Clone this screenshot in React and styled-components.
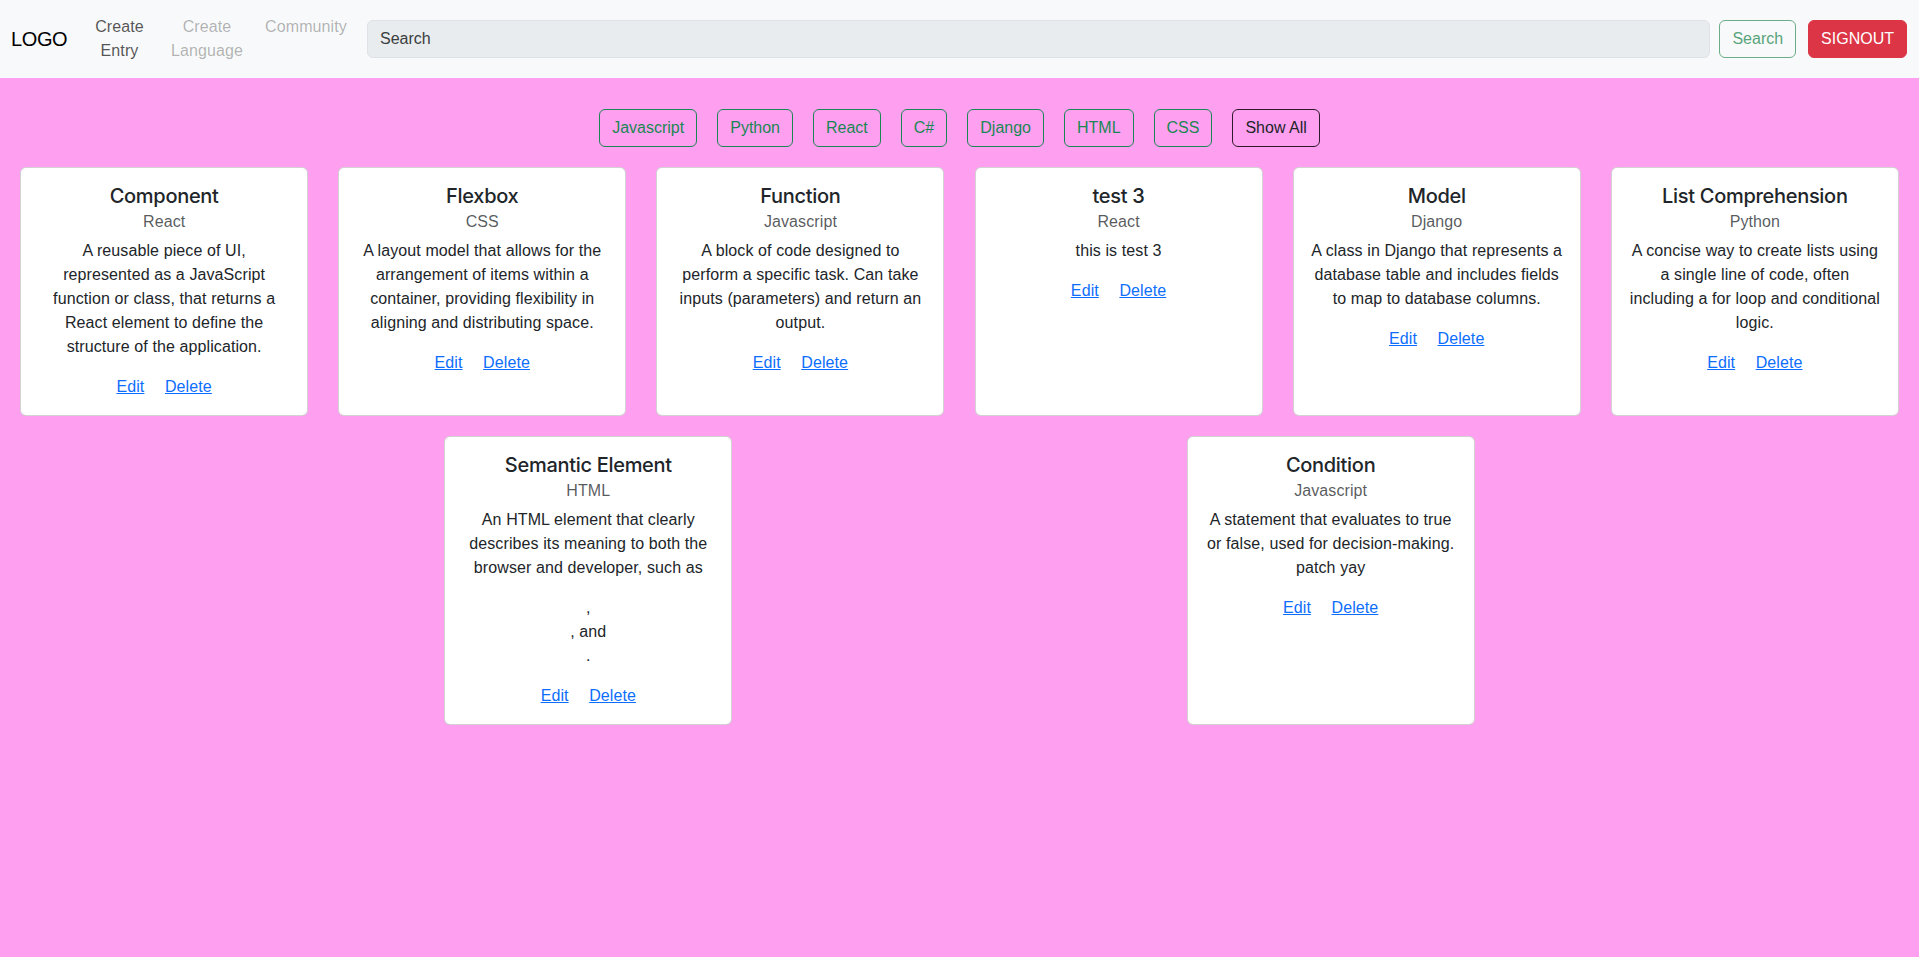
import React from 'react'
import styled, { createGlobalStyle } from 'styled-components'

const GlobalStyle = createGlobalStyle`
  html, body {
    margin: 0;
    padding: 0;
    background: #ff9ff0;
  }

  body {
    font-family: "Liberation Sans", Arial, sans-serif;
    font-size: 16px;
    line-height: 1.5;
    color: #212529;
    letter-spacing: 0.1px;
  }

  * {
    box-sizing: border-box;
  }
`

const Navbar = styled.nav`
  display: flex;
  align-items: center;
  height: 78px;
  padding: 0 12px 0 11px;
  background: #f8f9fa;
`

const Brand = styled.a`
  width: 73px;
  font-size: 20px;
  line-height: 30px;
  letter-spacing: -0.4px;
  color: #000;
  text-decoration: none;
`

const NavList = styled.div`
  display: flex;
  align-items: flex-start;
  height: 48px;
`

const NavItem = styled.a`
  flex: 0 0 ${(p) => p.$width}px;
  text-align: center;
  line-height: 24px;
  color: ${(p) => (p.$muted ? 'rgba(0, 0, 0, 0.3)' : 'rgba(0, 0, 0, 0.68)')};
  text-decoration: none;
`

const SearchForm = styled.form`
  flex: 1;
  display: flex;
  align-items: center;
  margin-left: 14px;
`

const SearchInput = styled.input`
  flex: 1;
  height: 38px;
  padding: 6px 12px;
  font: inherit;
  color: #212529;
  background: #e9ecef;
  border: 1px solid #dee2e6;
  border-radius: 6px;

  &::placeholder {
    color: #3a3d40;
  }
`

const Button = styled.button`
  height: 38px;
  padding: 6px 12px;
  font: inherit;
  line-height: 24px;
  border-radius: 6px;
  cursor: pointer;
`

const SearchButton = styled(Button)`
  margin-left: 9px;
  color: #5aa47c;
  background: transparent;
  border: 1px solid #6aad88;
`

const SignoutButton = styled(Button)`
  margin-left: 12px;
  color: #fff;
  background: #dc3545;
  border: 1px solid #dc3545;
`

const FilterBar = styled.div`
  display: flex;
  flex-wrap: wrap;
  justify-content: center;
  padding-top: 21px;
`

const FilterButton = styled(Button)`
  margin: 10px;
  background: transparent;
  color: ${(p) => (p.$dark ? '#212529' : '#198754')};
  border: 1px solid ${(p) => (p.$dark ? '#2e1a2c' : '#198754')};
`

const CardList = styled.div`
  display: flex;
  flex-wrap: wrap;
  justify-content: space-evenly;
`

const Card = styled.div`
  width: 288px;
  margin: 10px;
  padding: 16px;
  text-align: center;
  background: #fff;
  border: 1px solid rgba(0, 0, 0, 0.175);
  border-radius: 6px;
`

const Title = styled.h5`
  margin: 0 0 8px;
  font-family: Inter, "Liberation Sans", sans-serif;
  font-size: 20px;
  font-weight: 500;
  line-height: 1.2;
  letter-spacing: -0.3px;
`

const Subtitle = styled.h6`
  margin: -4px 0 8px;
  font-size: 16px;
  font-weight: 400;
  line-height: 1.2;
  color: rgba(33, 37, 41, 0.75);
`

const Text = styled.p`
  margin: 0 0 16px;
  white-space: pre-line;
`

const Links = styled.div`
  line-height: 24px;
`

const CardLink = styled.a`
  color: #0d6efd;
  text-decoration: underline;

  & + & {
    margin-left: 16px;
  }
`

const languages = ['Javascript', 'Python', 'React', 'C#', 'Django', 'HTML', 'CSS']

const entries = [
  {
    id: 1,
    title: 'Component',
    language: 'React',
    description:
      'A reusable piece of UI,\nrepresented as a JavaScript\nfunction or class, that returns a\nReact element to define the\nstructure of the application.'
  },
  {
    id: 2,
    title: 'Flexbox',
    language: 'CSS',
    description:
      'A layout model that allows for the\narrangement of items within a\ncontainer, providing flexibility in\naligning and distributing space.'
  },
  {
    id: 3,
    title: 'Function',
    language: 'Javascript',
    description:
      'A block of code designed to\nperform a specific task. Can take\ninputs (parameters) and return an\noutput.'
  },
  { id: 4, title: 'test 3', language: 'React', description: 'this is test 3' },
  {
    id: 5,
    title: 'Model',
    language: 'Django',
    description:
      'A class in Django that represents a\ndatabase table and includes fields\nto map to database columns.'
  },
  {
    id: 6,
    title: 'List Comprehension',
    language: 'Python',
    description:
      'A concise way to create lists using\na single line of code, often\nincluding a for loop and conditional\nlogic.'
  },
  {
    id: 7,
    title: 'Semantic Element',
    language: 'HTML',
    description:
      'An HTML element that clearly\ndescribes its meaning to both the\nbrowser and developer, such as',
    trailing: ',\n, and\n.'
  },
  {
    id: 8,
    title: 'Condition',
    language: 'Javascript',
    description:
      'A statement that evaluates to true\nor false, used for decision-making.\npatch yay'
  }
]

const EntryCard = ({ title, language, description, trailing }) => (
  <Card>
    <Title>{title}</Title>
    <Subtitle>{language}</Subtitle>
    <Text>{description}</Text>
    {trailing && <Text>{trailing}</Text>}
    <Links>
      <CardLink href="#">Edit</CardLink> <CardLink href="#">Delete</CardLink>
    </Links>
  </Card>
)

const App = () => (
  <>
    <GlobalStyle />
    <Navbar>
      <Brand href="#">LOGO</Brand>
      <NavList>
        <NavItem href="#" $width={71}>Create Entry</NavItem>
        <NavItem href="#" $width={104} $muted>Create Language</NavItem>
        <NavItem href="#" $width={94} $muted>Community</NavItem>
      </NavList>
      <SearchForm onSubmit={(e) => e.preventDefault()}>
        <SearchInput placeholder="Search" />
        <SearchButton type="submit">Search</SearchButton>
      </SearchForm>
      <SignoutButton>SIGNOUT</SignoutButton>
    </Navbar>

    <FilterBar>
      {languages.map((lang) => (
        <FilterButton key={lang}>{lang}</FilterButton>
      ))}
      <FilterButton $dark>Show All</FilterButton>
    </FilterBar>

    <CardList>
      {entries.map((entry) => (
        <EntryCard key={entry.id} {...entry} />
      ))}
    </CardList>
  </>
)

export default App
